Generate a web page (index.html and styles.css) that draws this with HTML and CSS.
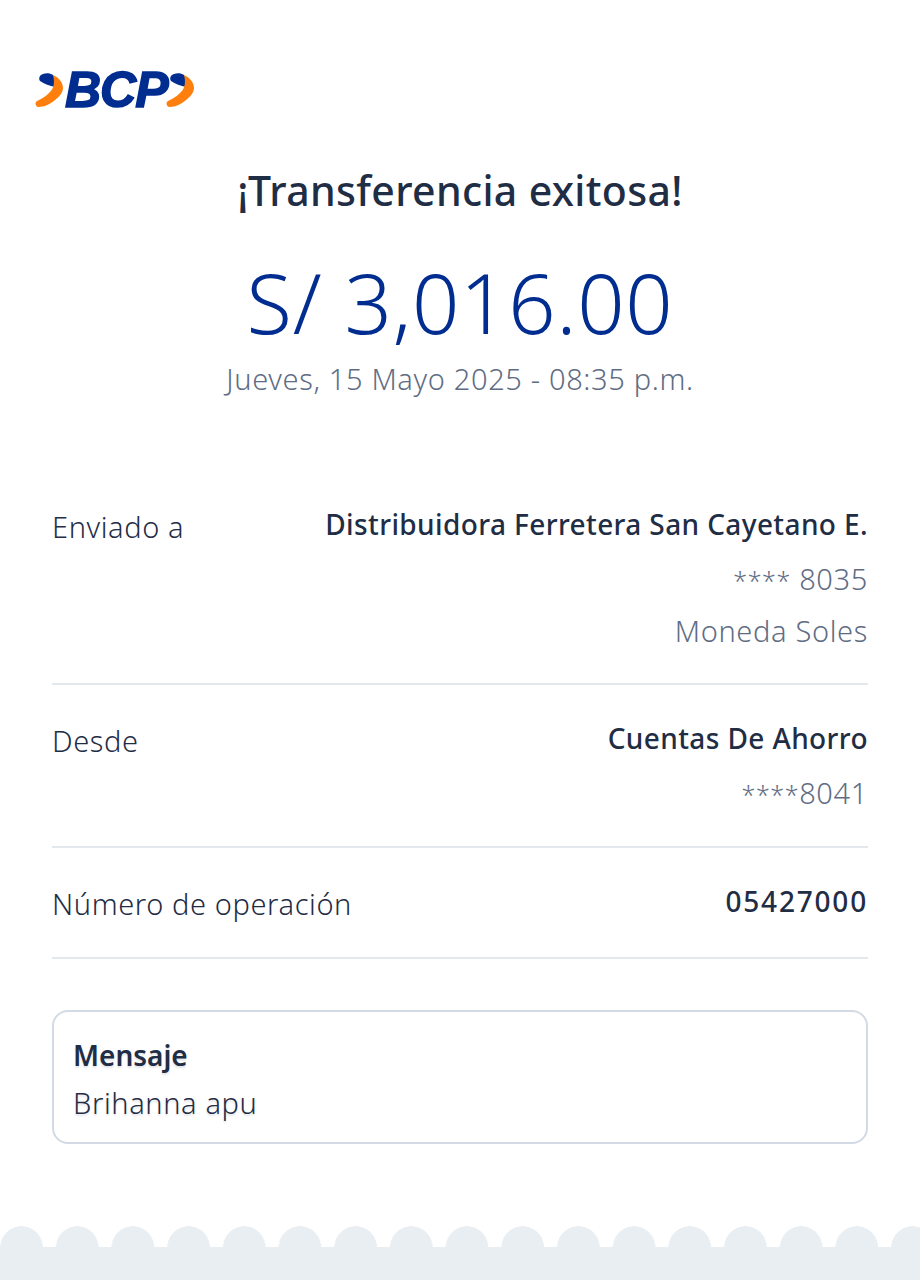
FILE: index.html
```html
<!DOCTYPE html>
<html lang="es">
<head>
    <meta charset="UTF-8">
    <meta name="viewport" content="width=device-width, initial-scale=1.0">
    <title>Constancia BCP</title>
    <link rel="stylesheet" href="styles.css">
</head>
<body>
    <div class="page">
        <div class="logo">
            <svg class="chevron" width="28" height="36" viewBox="0 0 28 36">
                <path d="M5 9 C3 6 5 3 8 2 C11 1 15 1 18 3 C20 6 20.500 10 20 15 C15 14 9 12 5 9 Z" fill="#002d8f"/>
                <path d="M18 3 C23 5 28 10 28 16 C28 22 22 27 16 31 C11 34 7 35 3 35 C0 34 0 30 2 29 C6 27 10 25 14 21 C19 17 20 10 18 3 Z" fill="#ff7f0e"/>
            </svg>
            <span class="logo-text">BCP</span>
            <svg class="chevron" width="28" height="36" viewBox="0 0 28 36">
                <path d="M5 9 C3 6 5 3 8 2 C11 1 15 1 18 3 C20 6 20.500 10 20 15 C15 14 9 12 5 9 Z" fill="#002d8f"/>
                <path d="M18 3 C23 5 28 10 28 16 C28 22 22 27 16 31 C11 34 7 35 3 35 C0 34 0 30 2 29 C6 27 10 25 14 21 C19 17 20 10 18 3 Z" fill="#ff7f0e"/>
            </svg>
        </div>

        <div class="summary">
            <h1>¡Transferencia exitosa!</h1>
            <div class="amount">S/ 3,016.00</div>
            <div class="date">Jueves, 15 Mayo 2025 - 08:35 p.m.</div>
        </div>

        <div class="details">
            <div class="row row-first">
                <div class="label">Enviado a</div>
                <div class="values">
                    <div class="strong">Distribuidora Ferretera San Cayetano E.</div>
                    <div class="muted"><span class="mask">****</span> 8035</div>
                    <div class="muted">Moneda Soles</div>
                </div>
            </div>
            <div class="row">
                <div class="label">Desde</div>
                <div class="values">
                    <div class="strong">Cuentas De Ahorro</div>
                    <div class="muted"><span class="mask">****</span>8041</div>
                </div>
            </div>
            <div class="row row-last">
                <div class="label">Número de operación</div>
                <div class="values">
                    <div class="strong digits">05427000</div>
                </div>
            </div>
        </div>

        <div class="message">
            <div class="message-title">Mensaje</div>
            <div class="message-text">Brihanna apu</div>
        </div>
    </div>

    <div class="footer">
        <div class="scallops"></div>
        <div class="footer-band"></div>
    </div>
</body>
</html>
```

FILE: styles.css
```css
html, body {
    margin: 0;
    padding: 0;
}
body {
    width: 920px;
    height: 1280px;
    overflow: hidden;
    background: #fff;
    font-family: "Noto Sans", Arial, sans-serif;
    color: #1f2d45;
    display: flex;
    flex-direction: column;
}
.page {
    flex-grow: 1;
    padding: 68px 52px 0;
    box-sizing: border-box;
}
.logo {
    display: flex;
    align-items: center;
    height: 44px;
    margin-left: -17px;
}
.logo-text {
    font-family: "Liberation Sans", Arial, sans-serif;
    font-weight: bold;
    font-style: italic;
    font-size: 50px;
    line-height: 44px;
    letter-spacing: -1px;
    color: #002d8f;
    -webkit-text-stroke: 1.5px #002d8f;
    margin: 0 -2px 0 2px;
}
.summary {
    text-align: center;
    margin-top: 48px;
}
h1 {
    margin: 0;
    font-size: 41px;
    line-height: 60px;
    font-weight: 500;
    letter-spacing: 0.35px;
    color: #1f2d45;
}
.amount {
    font-size: 83px;
    line-height: 100px;
    margin-top: 32px;
    font-weight: 300;
    letter-spacing: 0.7px;
    color: #002d8f;
}
.date {
    font-size: 29px;
    line-height: 40px;
    margin-top: 7px;
    font-weight: 300;
    letter-spacing: 0.65px;
    color: #5f6d84;
}
.details {
    margin-top: 80px;
}
.row {
    display: flex;
    justify-content: space-between;
    padding: 33px 0 32px;
    border-bottom: 2px solid #e3e8ee;
}
.row-first {
    padding-top: 25px;
}
.row-last {
    padding-bottom: 33px;
}
.label {
    font-size: 29px;
    line-height: 40px;
    padding-top: 3px;
    font-weight: 300;
    letter-spacing: 0.6px;
}
.values {
    text-align: right;
}
.strong {
    font-size: 28px;
    line-height: 40px;
    font-weight: 500;
    letter-spacing: 0.39px;
}
.digits {
    letter-spacing: 1.8px;
}
.muted {
    font-size: 29px;
    line-height: 40px;
    margin-top: 15px;
    font-weight: 300;
    letter-spacing: 0.65px;
    color: #5f6d84;
}
.muted + .muted {
    margin-top: 11px;
}
.mask {
    font-size: 25px;
}
.message {
    margin-top: 51px;
    padding: 23px 19px 19px;
    border: 2px solid #d3dae6;
    border-radius: 16px;
}
.message-title {
    font-size: 28px;
    line-height: 40px;
    font-weight: 600;
    text-shadow: 0 2px 2px rgba(31, 45, 69, 0.12);
}
.message-text {
    font-size: 29px;
    line-height: 40px;
    margin-top: 8px;
    font-weight: 300;
    letter-spacing: 0.6px;
    text-shadow: 0 2px 2px rgba(31, 45, 69, 0.12);
}
.footer {
    flex-shrink: 0;
}
.scallops {
    height: 21px;
    background-image: radial-gradient(circle at 21.500px 21.500px, #e9eef3 21px, transparent 21.500px);
    background-size: 55.700px 21px;
    background-repeat: repeat-x;
}
.footer-band {
    height: 33px;
    background: #e9eef3;
}
```
